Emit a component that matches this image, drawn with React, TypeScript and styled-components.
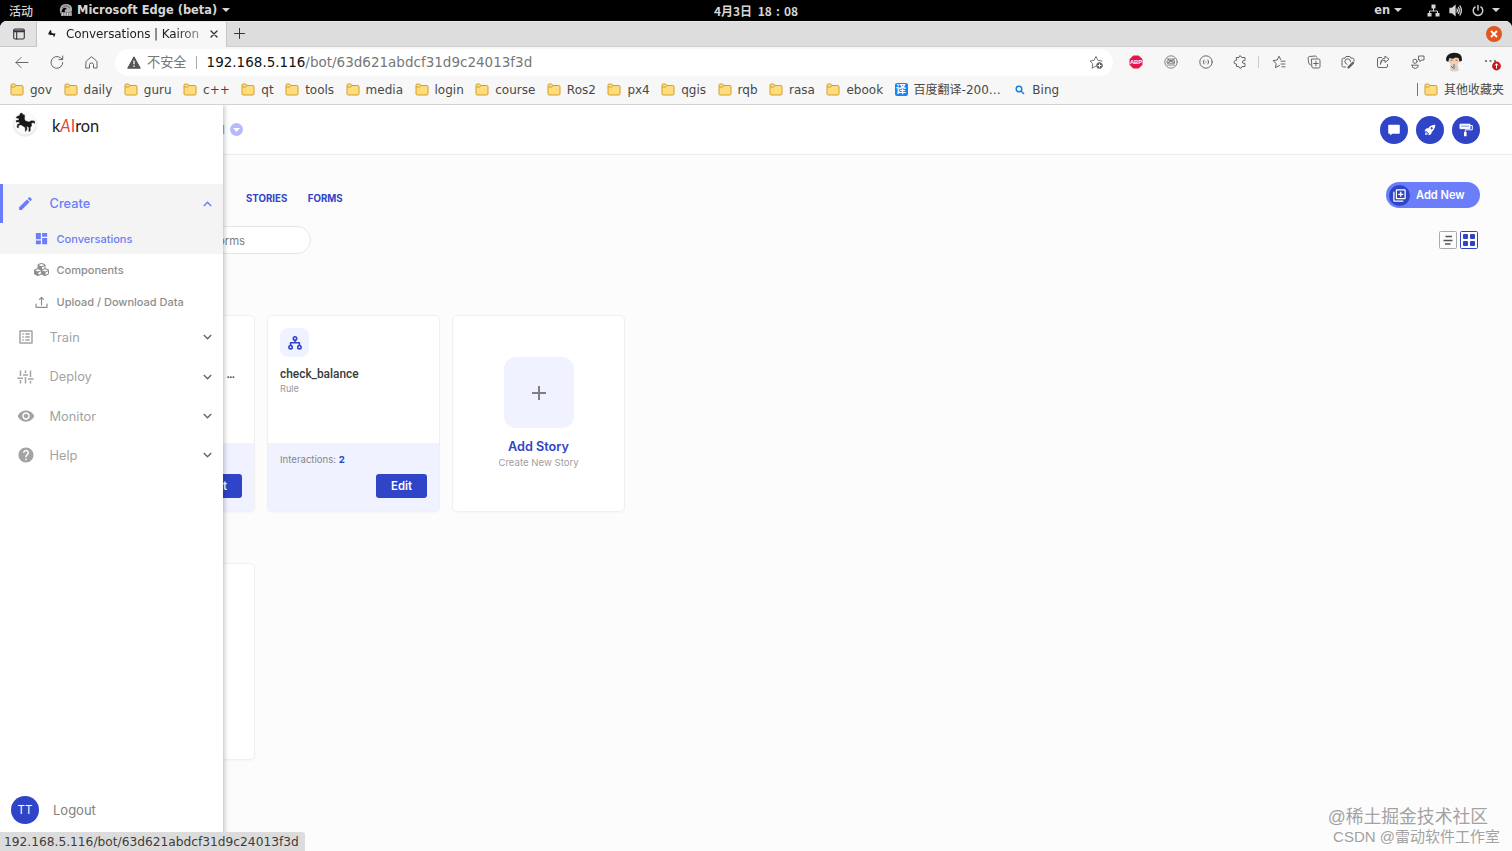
import React from 'react';
import styled, { createGlobalStyle } from 'styled-components';
import {
  MdEdit,
  MdDashboard,
  MdOutlineListAlt,
  MdVisibility,
  MdHelp,
  MdOutlineLibraryAdd,
} from 'react-icons/md';
import { FaCubes } from 'react-icons/fa';
import { IoRocketSharp } from 'react-icons/io5';

const sysFont = `'DejaVu Sans', 'Noto Sans CJK SC', sans-serif`;
const appFont = `Inter, 'Noto Sans CJK SC', sans-serif`;
const blue = '#2f44c6';
const lightBlue = '#6b7df8';

const GlobalStyle = createGlobalStyle`
  * { box-sizing: border-box; }
  html, body { margin: 0; padding: 0; height: 100%; overflow: hidden; }
  svg { display: block; flex: none; }
`;

const Screen = styled.div`
  width: 1512px;
  height: 851px;
  display: flex;
  flex-direction: column;
  background: #000;
  overflow: hidden;
  white-space: nowrap;
  font-family: ${sysFont};
`;

/* ---------- desktop bar ---------- */
const DesktopBar = styled.div`
  height: 21px;
  flex: none;
  display: grid;
  grid-template-columns: 1fr auto 1fr;
  align-items: center;
  color: #d6d6d6;
  font-weight: bold;
  font-size: 11.4px;
`;
const BarGroup = styled.div<{ $end?: boolean }>`
  display: flex;
  align-items: center;
  justify-content: ${(p) => (p.$end ? 'flex-end' : 'flex-start')};
  padding: ${(p) => (p.$end ? '0 12px 1px 0' : '0 0 1px 9px')};
`;
const Activities = styled.span`
  font: 500 12px 'Noto Sans CJK SC', sans-serif;
  margin-right: 26px;
  padding-top: 1px;
`;
const AppName = styled.span`
  margin: 0 5px 0 4px;
  letter-spacing: 0.03px;
`;
const Clock = styled.div`
  font: bold 12px 'Noto Sans CJK SC', sans-serif;
  word-spacing: 3px;
`;
const Colon = styled.span`
  display: inline-block;
  width: 12px;
  text-align: center;
`;
const Caret = styled.i<{ $left?: number }>`
  border: 4px solid transparent;
  border-top-color: #d6d6d6;
  border-bottom: 0;
  margin-left: ${(p) => p.$left ?? 0}px;
`;
const Spacer = styled.span<{ $w: number }>`
  width: ${(p) => p.$w}px;
  flex: none;
`;

/* ---------- browser chrome ---------- */
const Browser = styled.div`
  flex: 1;
  display: flex;
  flex-direction: column;
  background: #f7f7f7;
  border-radius: 7px 7px 0 0;
  overflow: hidden;
`;
const TabStrip = styled.div`
  height: 26px;
  flex: none;
  display: flex;
  background: #ddd;
  border-top: 1px solid #e9e9e9;
  color: #333;
`;
const TabAction = styled.div`
  width: 37px;
  display: flex;
  align-items: center;
  justify-content: center;
  background: #e2e2e2;
  border-right: 1px solid #c4c4c4;
  border-bottom: 1px solid #c8c8c8;
  padding-left: 2px;
`;
const Tab = styled.div`
  width: 189px;
  display: flex;
  align-items: center;
  padding: 0 8px 2px 10px;
  background: #f7f7f7;
  font-size: 12px;
`;
const TabTitle = styled.span`
  flex: 1;
  margin: 0 5px 0 9px;
  color: #222;
  letter-spacing: -0.1px;
  mask-image: linear-gradient(90deg, #000 78%, rgba(0, 0, 0, 0.35));
`;
const StripRest = styled.div`
  flex: 1;
  display: flex;
  align-items: center;
  justify-content: space-between;
  padding: 0 10px 0 7px;
  border-left: 1px solid #c4c4c4;
  border-bottom: 1px solid #cfcfcf;
`;
const CloseButton = styled.div`
  width: 16px;
  height: 16px;
  border-radius: 50%;
  background: #e2561f;
  display: flex;
  align-items: center;
  justify-content: center;
`;
const Toolbar = styled.div`
  height: 30px;
  flex: none;
  display: flex;
  align-items: center;
  padding: 0 9px 0 14px;
  color: #666;
`;
const NavIcons = styled.div`
  display: flex;
  flex: none;
  gap: 19.5px;
  width: 101px;
`;
const Address = styled.div`
  width: 998px;
  flex: none;
  height: 27px;
  border-radius: 14px;
  background: #fff;
  display: flex;
  align-items: center;
  padding: 0 9px 0 12px;
  font-size: 13.5px;
  color: #777;
`;
const Insecure = styled.span`
  font: 13.2px/16px 'Noto Sans CJK SC', sans-serif;
  margin: 0 9px 1px 6px;
`;
const Divider = styled.span<{ $h: number; $color: string }>`
  width: 1px;
  flex: none;
  height: ${(p) => p.$h}px;
  background: ${(p) => p.$color};
`;
const Url = styled.span`
  margin-left: 10px;
  flex: 1;
  b { font-weight: normal; color: #111; }
`;
const Extensions = styled.div`
  flex: 1;
  display: flex;
  align-items: center;
  padding-left: 16px;
`;
const ExtGroup = styled.div<{ $left?: number }>`
  display: flex;
  align-items: center;
  flex: none;
  gap: 20.8px;
  margin-left: ${(p) => p.$left ?? 0}px;
`;
const Bookmarks = styled.div`
  height: 28px;
  flex: none;
  display: flex;
  align-items: center;
  gap: 11.5px;
  padding: 0 8px 2px 10px;
  border-bottom: 1px solid #d2d2d2;
  font-size: 12px;
  color: #484848;
`;
const Bookmark = styled.div<{ $end?: boolean }>`
  display: flex;
  align-items: center;
  gap: 6px;
  line-height: 16px;
  margin-left: ${(p) => (p.$end ? 'auto' : '0')};
`;
const TranslateBadge = styled.span`
  width: 13px;
  height: 13px;
  border-radius: 2px;
  background: #1486f5;
  color: #fff;
  font: bold 10px/12px 'Noto Sans CJK SC', sans-serif;
  text-align: center;
`;

/* ---------- page ---------- */
const Page = styled.div`
  flex: 1;
  position: relative;
  background: #fcfcfc;
  font-family: ${appFont};
  overflow: hidden;
`;
const PageHeader = styled.header`
  height: 50px;
  display: flex;
  align-items: center;
  justify-content: space-between;
  padding: 0 32px 0 222px;
  background: #fff;
  border-bottom: 1px solid #ececec;
`;
const BotPicker = styled.div`
  display: flex;
  align-items: center;
  gap: 5px;
  color: #999;
  font-size: 12px;
`;
const PickerDot = styled.span`
  width: 13px;
  height: 13px;
  border-radius: 50%;
  background: #b7baf9;
  display: flex;
  align-items: center;
  justify-content: center;
`;
const HeaderActions = styled.div`
  display: flex;
  gap: 8px;
`;
const RoundButton = styled.div`
  width: 28px;
  height: 28px;
  border-radius: 50%;
  background: ${blue};
  color: #fff;
  display: flex;
  align-items: center;
  justify-content: center;
`;
const Content = styled.main`
  padding: 27px 32px 0 82px;
`;
const Row = styled.div<{ $h: number }>`
  height: ${(p) => p.$h}px;
  display: flex;
  align-items: center;
  justify-content: space-between;
`;
const Tabs = styled.nav`
  display: flex;
  gap: 20.5px;
  padding: 7px 0 0 164px;
  font-size: 9.7px;
  font-weight: 700;
  color: ${blue};
`;
const AddNew = styled.div`
  width: 94px;
  height: 26px;
  border-radius: 13px;
  background: ${lightBlue};
  color: #fff;
  display: flex;
  align-items: center;
  gap: 6px;
  padding: 0 0 0 3px;
  font-size: 11.1px;
  font-weight: 600;
`;
const AddNewIcon = styled.span`
  width: 21px;
  height: 21px;
  border-radius: 50%;
  background: ${blue};
  display: flex;
  align-items: center;
  justify-content: center;
`;
const Search = styled.div`
  width: 229px;
  height: 28px;
  border: 1px solid #e6e6e6;
  border-radius: 14px;
  background: #fff;
  display: flex;
  align-items: center;
  justify-content: flex-end;
  padding: 3px 65px 0 0;
  font-size: 11.3px;
  color: #808080;
`;
const ViewToggle = styled.div`
  display: flex;
  gap: 3px;
  padding-right: 2px;
`;
const CardGrid = styled.div<{ $top: number }>`
  display: flex;
  gap: 12px;
  margin-top: ${(p) => p.$top}px;
`;
const Card = styled.article`
  width: 173px;
  height: 197px;
  border: 1px solid #f0f0f0;
  border-radius: 5px;
  background: #fff;
  display: flex;
  flex-direction: column;
  overflow: hidden;
  box-shadow: 0 1px 2px rgba(0, 0, 0, 0.03);
`;
const CardBody = styled.div`
  flex: 1;
  padding: 12px;
`;
const CardIcon = styled.div`
  width: 29px;
  height: 29px;
  border-radius: 8px;
  background: #f0f3ff;
  color: ${blue};
  display: flex;
  align-items: center;
  justify-content: center;
`;
const CardTitle = styled.div<{ $right?: boolean }>`
  margin-top: 9px;
  font-family: Roboto, sans-serif;
  font-size: 11.9px;
  line-height: 16px;
  font-weight: 500;
  color: #3a3a3a;
  text-align: ${(p) => (p.$right ? 'right' : 'left')};
  padding-right: ${(p) => (p.$right ? 7 : 0)}px;
`;
const CardKind = styled.div`
  font-size: 9.2px;
  line-height: 13px;
  color: #999;
`;
const CardFooter = styled.div`
  height: 68px;
  background: #f0f3ff;
  padding: 10px 12px 13px;
  display: flex;
  flex-direction: column;
  justify-content: space-between;
  font-size: 9.6px;
  line-height: 13px;
  color: #85858d;
  b { color: ${blue}; font-weight: 700; }
`;
const EditButton = styled.div`
  align-self: flex-end;
  width: 51px;
  height: 24px;
  border-radius: 3px;
  background: ${blue};
  color: #fff;
  font-size: 11.3px;
  font-weight: 600;
  line-height: 24px;
  text-align: center;
`;
const AddCard = styled(Card)`
  align-items: center;
  padding-top: 41px;
`;
const AddTile = styled.div`
  width: 70px;
  height: 71px;
  border-radius: 12px;
  background: #f0f3ff;
  display: flex;
  align-items: center;
  justify-content: center;
`;
const AddTitle = styled.div`
  margin-top: 10px;
  font-size: 12.7px;
  line-height: 17px;
  font-weight: 600;
  color: ${blue};
`;
const AddHint = styled.div`
  font-size: 9.6px;
  line-height: 13px;
  margin-top: 1px;
  color: #a0a0a0;
`;

/* ---------- sidebar drawer ---------- */
const Sidebar = styled.aside`
  position: absolute;
  inset: 0 auto 0 0;
  width: 223px;
  background: #fff;
  box-shadow: 1px 0 5px rgba(0, 0, 0, 0.28);
  display: flex;
  flex-direction: column;
`;
const Brand = styled.div`
  height: 79px;
  flex: none;
  display: flex;
  align-items: flex-start;
  gap: 14px;
  padding: 4px 0 0 12px;
`;
const BrandName = styled.div`
  font: 16.4px/20px Lato, sans-serif;
  color: #222;
  padding-top: 7px;
  i { color: #e8493d; }
  i + i { font-style: normal; }
`;
const OpenGroup = styled.div`
  background: #f4f4f4;
`;
const NavItem = styled.div<{ $active?: boolean }>`
  height: ${(p) => (p.$active ? 39 : 39.4)}px;
  display: flex;
  align-items: center;
  padding: 0 10px 0 ${(p) => (p.$active ? 14 : 17)}px;
  border-left: ${(p) => (p.$active ? `3px solid ${lightBlue}` : '0')};
  color: ${(p) => (p.$active ? lightBlue : '#a3a3a3')};
  font-size: 12.8px;
  font-weight: ${(p) => (p.$active ? 500 : 400)};
`;
const IconSlot = styled.span`
  width: 17px;
  display: flex;
  justify-content: center;
`;
const NavLabel = styled.span`
  flex: 1;
  margin-left: 15.5px;
`;
const SubItem = styled.div<{ $active?: boolean }>`
  height: ${(p) => (p.$active ? 31 : 31.8)}px;
  display: flex;
  align-items: center;
  gap: 7.5px;
  padding-left: 34px;
  font-size: 11px;
  font-weight: 500;
  color: ${(p) => (p.$active ? lightBlue : '#8e8e8e')};
`;
const Logout = styled.div`
  margin: auto 0 27px;
  display: flex;
  align-items: center;
  gap: 14px;
  padding-left: 11px;
  font-size: 13px;
  color: #808080;
`;
const Avatar = styled(RoundButton)`
  font-size: 11.5px;
`;
const StatusBubble = styled.div`
  position: absolute;
  left: 0;
  bottom: 0;
  height: 19px;
  padding: 0 6px 0 4px;
  border-radius: 0 3px 0 0;
  background: #dcdcdc;
  color: #3c3c3c;
  font: 12.23px/20px ${sysFont};
`;
const Watermark = styled.div`
  position: absolute;
  right: 12px;
  bottom: 5px;
  display: flex;
  flex-direction: column;
  align-items: flex-end;
  font-family: 'Liberation Sans', 'Noto Sans CJK SC', sans-serif;
  color: #a2a2a2;
`;
const WatermarkLine = styled.span<{ $size: number; $shift?: number }>`
  font-size: ${(p) => p.$size}px;
  line-height: 19px;
  font-weight: 400;
  margin-right: ${(p) => p.$shift ?? 0}px;
  text-shadow: 1px 1px 0 #fff;
`;

/* ---------- drawings ---------- */
type LineProps = { w?: number; h?: number; box?: string; sw?: number; children: React.ReactNode };
const Line = ({ w = 14, h = w, box = '0 0 14 14', sw = 1, children }: LineProps) => (
  <svg width={w} height={h} viewBox={box} fill="none" stroke="currentColor" strokeWidth={sw} strokeLinecap="round" strokeLinejoin="round">
    {children}
  </svg>
);

const ChevronSvg = styled.svg`
  margin-right: 1.5px;
`;
const Chevron = ({ up }: { up?: boolean }) => (
  <ChevronSvg width="9" height="6" viewBox="0 0 9 6" fill="none" stroke={up ? lightBlue : '#666'} strokeWidth="1.4">
    <path d={up ? 'M.8 5 4.5 1.3 8.2 5' : 'M.8 1 4.5 4.7 8.2 1'} />
  </ChevronSvg>
);

const Folder = () => (
  <svg width="14" height="13" viewBox="0 0 14 13">
    <path d="M1 2.3Q1 1 2.2 1H4.6L6 2.5H11.8Q13 2.5 13 3.7V10.8Q13 12 11.8 12H2.2Q1 12 1 10.8Z" fill="#ffdc7c" stroke="#cf9f2e" />
    <path d="M1.3 4H4.5L6 2.6" fill="none" stroke="#cf9f2e" />
  </svg>
);

const Horse = () => (
  <svg width="26" height="28" viewBox="0 0 26 28">
    <circle cx="13" cy="15.3" r="12.4" fill="#eceded" />
    <circle cx="13" cy="13.6" r="11.4" fill="#fafafa" />
    <path
      d="M10 4 10.6 5.5 12.8 6 12.3 7.2 13 8.2 12.2 9 13.2 11.8 17 13 19.3 11.8 22.6 12 22.6 14.6 21 13.6 19.4 14.3 19.6 17 18.2 18.4 18.3 22 16.8 22.4 17 18.6 14.8 17 15 20.4 13.4 22.6 13.2 18.4 9 15.8 6.4 16.6 6.4 19 5 18.2 5.4 15.6 7.6 14.4 7.2 12.8 4.4 13.2 4 11.6 7 11 7 9.4 4 8.8 5.3 7.2 7.5 6.7 8.2 4.6Z"
      fill="#171717"
      stroke="#171717"
      strokeWidth=".4"
    />
  </svg>
);

const TreeNodes = () => (
  <Line w={14} sw={1.6}>
    <circle cx="7" cy="2.5" r="1.7" />
    <circle cx="2.6" cy="11.2" r="1.7" />
    <circle cx="11.4" cy="11.2" r="1.7" />
    <path d="M7 4.3V6.7M2.6 9.3V6.7H11.4V9.3" />
  </Line>
);

const Sliders = () => (
  <svg width="17" height="14" viewBox="0 0 17 14" fill="none" stroke="currentColor" strokeWidth="1.5">
    <path d="M3.5.5V6M3.5 10V13.5M.5 8.3H6M8.5.5V3M8.5 7V13.5M6 5H11M13.5.5V7M13.5 11V13.5M11 9H16.5" />
  </svg>
);

const PaintRoller = () => (
  <svg width="14" height="14" viewBox="0 0 14 14" fill="none" stroke="#fff">
    <path d="M1 1.2H11V5.6H1Z" fill="#fff" />
    <path d="M2 3.2H10" stroke="#2f44c6" strokeWidth=".6" />
    <path d="M11.5 2.5H13.3V6.8H6.3V9" />
    <path d="M5 9H7.6V13.3H5Z" fill="#fff" stroke="none" />
  </svg>
);

const Portrait = () => (
  <svg width="18" height="20" viewBox="0 0 18 20">
    <path d="M5.5 12H12.5L13.8 18.6Q9 20.4 5 18.6Z" fill="#d6d0c9" />
    <ellipse cx="9" cy="8" rx="5.4" ry="5.8" fill="#f4cdb3" />
    <path d="M1.2 8.8Q.2 1.6 8.8.8 17.8.6 17 8.8L14.6 9.8 13.6 6 10.5 5.6 8 6.7 4.3 6 3.3 10Z" fill="#1a1a1a" />
    <path d="M5.6 8.2H7.4M10.6 8.2H12.4M9 12V17M6 14 8 16" stroke="#5b4a44" strokeWidth=".8" />
  </svg>
);

const folders = ['gov', 'daily', 'guru', 'c++', 'qt', 'tools', 'media', 'login', 'course', 'Ros2', 'px4', 'qgis', 'rqb', 'rasa', 'ebook'];

const closedGroups = [
  { label: 'Train', icon: <MdOutlineListAlt size={18} /> },
  { label: 'Deploy', icon: <Sliders /> },
  { label: 'Monitor', icon: <MdVisibility size={18} /> },
  { label: 'Help', icon: <MdHelp size={18} /> },
];

const DesktopTop = () => (
  <DesktopBar>
    <BarGroup>
      <Activities>活动</Activities>
      <svg width="14" height="14" viewBox="0 0 14 14">
        <path d="M1 9Q0 1 7 1T13 8L12 9H6Q5 6 8 6 5 3 3 7L2 11Z" fill="#aaa" />
        <path d="M3 5Q7 1 11 5" stroke="#666" fill="none" />
        <path d="M2 9H13V13H2Z" fill="#888" />
        <path d="M3.5 10V12.5M6 10V12.5M8.5 10V12.5M11 10V12.5" stroke="#ddd" />
      </svg>
      <AppName>Microsoft Edge (beta)</AppName>
      <Caret />
    </BarGroup>
    <Clock>4月3日 18<Colon>:</Colon>08</Clock>
    <BarGroup $end>
      <span>en</span>
      <Caret $left={4} />
      <Spacer $w={25} />
      <svg width="13" height="13" viewBox="0 0 13 13" fill="#d6d6d6">
        <path d="M4.5.5H8.5V4.5H4.5ZM.5 9H4.5V12.5H.5ZM8.5 9H12.5V12.5H8.5Z" />
        <path d="M6.5 4V7M2.5 9V7H10.5V9" fill="none" stroke="#d6d6d6" />
      </svg>
      <Spacer $w={9} />
      <svg width="13" height="13" viewBox="0 0 13 13" fill="none" stroke="#d6d6d6" strokeWidth="1.3">
        <path d="M1 4.5H3L6 2V11L3 8.5H1Z" fill="#d6d6d6" />
        <path d="M7.7 4.5Q9 6.5 7.7 8.5M9.2 3Q11.4 6.5 9.2 10M10.7 1.5Q14 6.5 10.7 11.5" />
      </svg>
      <Spacer $w={10} />
      <svg width="12" height="13" viewBox="0 0 12 13" fill="none" stroke="#d6d6d6" strokeWidth="1.4">
        <path d="M3.5 2.6A4.8 4.8 0 1 0 8.5 2.6M6 1V6.5" />
      </svg>
      <Caret $left={8} />
    </BarGroup>
  </DesktopBar>
);

const BrowserChrome = () => (
  <>
    <TabStrip>
      <TabAction>
        <Line w={12} box="0 0 12 12" sw={1.1}>
          <rect x=".7" y="1" width="10.6" height="10" rx="1.5" />
          <path d="M1 2.2H11M1 3.6H11M3.7 3.5V11" />
        </Line>
      </TabAction>
      <Tab>
        <svg width="10" height="10" viewBox="0 0 10 10" fill="#111">
          <path d="M3.2.8 4.3 2 4.4 3.8 6.2 4.5 8.6 4.6 8 5.8 7.4 7.8 6.6 7.7 6.3 6.3 4.6 5.8 3.2 6.3 2.6 5.6 1 5.2 1.3 4.3 2.6 4.2 1.5 3.2 2.6 2.4Z" />
        </svg>
        <TabTitle>Conversations | Kairon</TabTitle>
        <Line w={8} box="0 0 8 8" sw={1.4}>
          <path d="M1 1 7 7M7 1 1 7" />
        </Line>
      </Tab>
      <StripRest>
        <Line w={12} box="0 0 12 12">
          <path d="M5.5.5V10.5M.5 5.5H10.5" />
        </Line>
        <CloseButton>
          <svg width="8" height="8" viewBox="0 0 8 8" stroke="#fff" strokeWidth="1.8">
            <path d="M1 1 7 7M7 1 1 7" />
          </svg>
        </CloseButton>
      </StripRest>
    </TabStrip>
    <Toolbar>
      <NavIcons>
        <Line w={15} box="0 0 15 15">
          <path d="M14 7.5H2M7 2.5 2 7.5 7 12.5" />
        </Line>
        <Line w={16} h={15} box="0 0 16 15">
          <path d="M13.8 7.5A5.9 5.9 0 1 1 11.8 3L13.5 4.5M13.7 1V4.6H10" />
        </Line>
        <Line w={15} box="0 0 15 15">
          <path d="M2 7Q2 6.3 2.5 5.9L7.5 1.7 12.5 5.9Q13 6.3 13 7V13H9.5V9.5Q9.5 8 7.5 8T5.5 9.5V13H2Z" />
        </Line>
      </NavIcons>
      <Address>
        <svg width="14" height="13" viewBox="0 0 14 13">
          <path d="M7 .8 13.3 12.2H.7Z" fill="#555" stroke="#555" strokeLinejoin="round" />
          <path d="M7 4.5V8.3M7 9.6V11" stroke="#fff" strokeWidth="1.3" />
        </svg>
        <Insecure>不安全</Insecure>
        <Divider $h={13} $color="#aaa" />
        <Url>
          <b>192.168.5.116</b>/bot/63d621abdcf31d9c24013f3d
        </Url>
        <Line w={15} box="0 0 15 15">
          <path d="M7 11 3 13.2 3.8 8.9 1 6 5 5.4 7 1.5 9 5.4 13 6" />
          <circle cx="10.5" cy="10.5" r="2.9" fill="#555" />
          <path d="M9 10.5H12M10.5 9V12" stroke="#fff" />
        </Line>
      </Address>
      <Extensions>
        <ExtGroup>
          <svg width="14" height="14" viewBox="0 0 14 14">
            <path d="M4.3.5H9.7L13.5 4.3V9.7L9.7 13.5H4.3L.5 9.7V4.3Z" fill="#e5164b" />
            <text x="7" y="9.2" textAnchor="middle" fontSize="5.8" fontWeight="bold" fontFamily="Liberation Sans, sans-serif" fill="#fff">ABP</text>
          </svg>
          <Line sw={0.8}>
            <circle cx="7" cy="7" r="6.2" />
            <path d="M3.5 4H10.5M3.5 10H10.5M3.5 5.8H10.5V8.2H3.5ZM4 4 10 8M10 4 4 8" />
          </Line>
          <Line>
            <circle cx="7" cy="7" r="6.2" />
            <path d="M5 5Q3.5 7 5 9M9 5Q10.5 7 9 9M6.8 7H7.2" />
          </Line>
          <Line>
            <path d="M3.5 2.5H6Q6-.2 8 1.2L8.7 2.5H12V5.5Q9.2 5.5 9.2 7T12 8.5V11.5H9Q8.5 14 6.5 13L5.8 11.5H3.5V9Q.6 9 1 7T3.5 5Z" />
          </Line>
        </ExtGroup>
        <ExtGroup $left={11}>
          <Divider $h={12} $color="#ccc" />
        </ExtGroup>
        <ExtGroup $left={12.5}>
          <Line>
            <path d="M7.5 10.5 3.5 12.6 4.2 8.5 1 5.6 5.2 5 7 1.2 8.7 4.5M9 6.2H13M9 9H13M10 11.8H13" />
          </Line>
          <Line>
            <path d="M3.5 10Q2 9.5 1.8 8L1 3.3Q1 1.8 2.4 1.5L8.4 1Q9.4 1 9.8 2.3M4.8 4H11.6Q13 4 13 5.3V11.6Q13 13 11.6 13H6.2Q4.8 13 4.8 11.6ZM8.9 6.2V10.8M6.6 8.5H11.2" />
          </Line>
          <Line>
            <path d="M4.5 12H2.5Q1 12 1 10.5V4.7Q1 3.2 2.5 3.2H4L5 1.5H9L10 3.2H11.5Q13 3.2 13 4.7V6M6 9.3A2.8 2.8 0 1 1 9.5 6.7" />
            <path d="M7.5 12.3 12 7.8" strokeWidth="2.4" />
          </Line>
          <Line>
            <path d="M5.5 2.5H3Q1.5 2.5 1.5 4V11Q1.5 12.5 3 12.5H10Q11.5 12.5 11.5 11V9.5M4.5 9Q5 5.2 9 5.2V7.5L13 4.2 9 1V3.2Q4.5 3.5 4.5 9Z" />
          </Line>
          <Line>
            <circle cx="4" cy="6.3" r="2.1" />
            <path d="M1 10.2H7.3Q7.5 13.4 4.2 13.4T1 10.2ZM8 1H13V5H10.5L9 6.7V5H8Z" />
          </Line>
        </ExtGroup>
        <ExtGroup $left={20}>
          <Portrait />
          <svg width="19" height="18" viewBox="0 0 19 18">
            <path d="M1 8H3M5.5 8H7.5M10 8H12" stroke="#555" strokeWidth="1.4" />
            <circle cx="12.5" cy="13" r="4.4" fill="#c4161c" />
            <path d="M12.5 15.5V11M10.8 12.5 12.5 10.7 14.2 12.5" stroke="#fff" fill="none" />
          </svg>
        </ExtGroup>
      </Extensions>
    </Toolbar>
    <Bookmarks>
      {folders.map((name) => (
        <Bookmark key={name}>
          <Folder />
          {name}
        </Bookmark>
      ))}
      <Bookmark>
        <TranslateBadge>译</TranslateBadge>
        百度翻译-200…
      </Bookmark>
      <Bookmark>
        <svg width="14" height="12" viewBox="-2 0 14 12" fill="none" stroke="#1a7bd8" strokeWidth="1.4">
          <circle cx="5" cy="5" r="2.8" />
          <path d="M7 7 10 10" />
        </svg>
        Bing
      </Bookmark>
      <Bookmark $end>
        <Divider $h={13} $color="#f04040" />
        <Folder />
        <span>其他收藏夹</span>
      </Bookmark>
    </Bookmarks>
  </>
);

const MainContent = () => (
  <>
    <PageHeader>
      <BotPicker>
        l
        <PickerDot>
          <svg width="7" height="4" viewBox="0 0 7 4" fill="#fff">
            <path d="M0 0H7L3.5 4Z" />
          </svg>
        </PickerDot>
      </BotPicker>
      <HeaderActions>
        <RoundButton>
          <svg width="12" height="12" viewBox="0 0 12 12" fill="#fff">
            <path d="M1 .8H11Q11.8.8 11.8 1.6V9Q11.8 9.8 11 9.8H4.2L2.2 11.6V9.8H1Q.2 9.8.2 9V1.6Q.2.8 1 .8Z" />
          </svg>
        </RoundButton>
        <RoundButton><IoRocketSharp size={12} /></RoundButton>
        <RoundButton><PaintRoller /></RoundButton>
      </HeaderActions>
    </PageHeader>
    <Content>
      <Row $h={26}>
        <Tabs>
          <span>STORIES</span>
          <span>FORMS</span>
        </Tabs>
        <AddNew>
          <AddNewIcon><MdOutlineLibraryAdd size={15} /></AddNewIcon>
          Add New
        </AddNew>
      </Row>
      <Row $h={63}>
        <Search>forms</Search>
        <ViewToggle>
          <svg width="18" height="18" viewBox="0 0 18 18" fill="none" stroke="#555">
            <rect x=".5" y=".5" width="17" height="17" rx="1" stroke="#aaa" />
            <path d="M6.5 5.5H13M4.5 9.5H13.5M6 13H11.5" strokeWidth="1.3" />
          </svg>
          <svg width="18" height="18" viewBox="0 0 18 18" fill={blue}>
            <rect x=".5" y=".5" width="17" height="17" rx="1" fill="#fff" stroke={blue} />
            <rect x="3" y="3" width="5" height="5" rx="1" />
            <rect x="10" y="3" width="5" height="5" rx="1" />
            <rect x="3" y="10" width="5" height="5" rx="1" />
            <rect x="10" y="10" width="5" height="5" rx="1" />
          </svg>
        </ViewToggle>
      </Row>
      <CardGrid $top={44}>
        <Card>
          <CardBody>
            <CardIcon />
            <CardTitle $right>…</CardTitle>
          </CardBody>
          <CardFooter>
            <span />
            <EditButton>Edit</EditButton>
          </CardFooter>
        </Card>
        <Card>
          <CardBody>
            <CardIcon><TreeNodes /></CardIcon>
            <CardTitle>check_balance</CardTitle>
            <CardKind>Rule</CardKind>
          </CardBody>
          <CardFooter>
            <span>Interactions: <b>2</b></span>
            <EditButton>Edit</EditButton>
          </CardFooter>
        </Card>
        <AddCard>
          <AddTile>
            <svg width="16" height="16" viewBox="0 0 16 16" stroke="#808080" strokeWidth="2">
              <path d="M8 1V15M1 8H15" />
            </svg>
          </AddTile>
          <AddTitle>Add Story</AddTitle>
          <AddHint>Create New Story</AddHint>
        </AddCard>
      </CardGrid>
      <CardGrid $top={51}>
        <Card />
      </CardGrid>
    </Content>
  </>
);

const Drawer = () => (
  <Sidebar>
    <Brand>
      <Horse />
      <BrandName>k<i>A</i><i>I</i>ron</BrandName>
    </Brand>
    <OpenGroup>
      <NavItem $active>
        <IconSlot><MdEdit size={17} /></IconSlot>
        <NavLabel>Create</NavLabel>
        <Chevron up />
      </NavItem>
      <SubItem $active><MdDashboard size={15} />Conversations</SubItem>
    </OpenGroup>
    <SubItem><FaCubes size={15} />Components</SubItem>
    <SubItem>
      <Line w={15} h={14} box="0 0 15 14" sw={1.2}>
        <path d="M2 9V12.3H13V9M7.5 10V2.5M5.5 4.3 7.5 2.3 9.5 4.3" />
      </Line>
      Upload / Download Data
    </SubItem>
    {closedGroups.map((g) => (
      <NavItem key={g.label}>
        <IconSlot>{g.icon}</IconSlot>
        <NavLabel>{g.label}</NavLabel>
        <Chevron />
      </NavItem>
    ))}
    <Logout>
      <Avatar>TT</Avatar>
      Logout
    </Logout>
  </Sidebar>
);

export default function App() {
  return (
    <Screen>
      <GlobalStyle />
      <DesktopTop />
      <Browser>
        <BrowserChrome />
        <Page>
          <MainContent />
          <Drawer />
          <StatusBubble>192.168.5.116/bot/63d621abdcf31d9c24013f3d</StatusBubble>
          <Watermark>
            <WatermarkLine $size={17.8} $shift={12}>@稀土掘金技术社区</WatermarkLine>
            <WatermarkLine $size={15}>CSDN @雷动软件工作室</WatermarkLine>
          </Watermark>
        </Page>
      </Browser>
    </Screen>
  );
}
